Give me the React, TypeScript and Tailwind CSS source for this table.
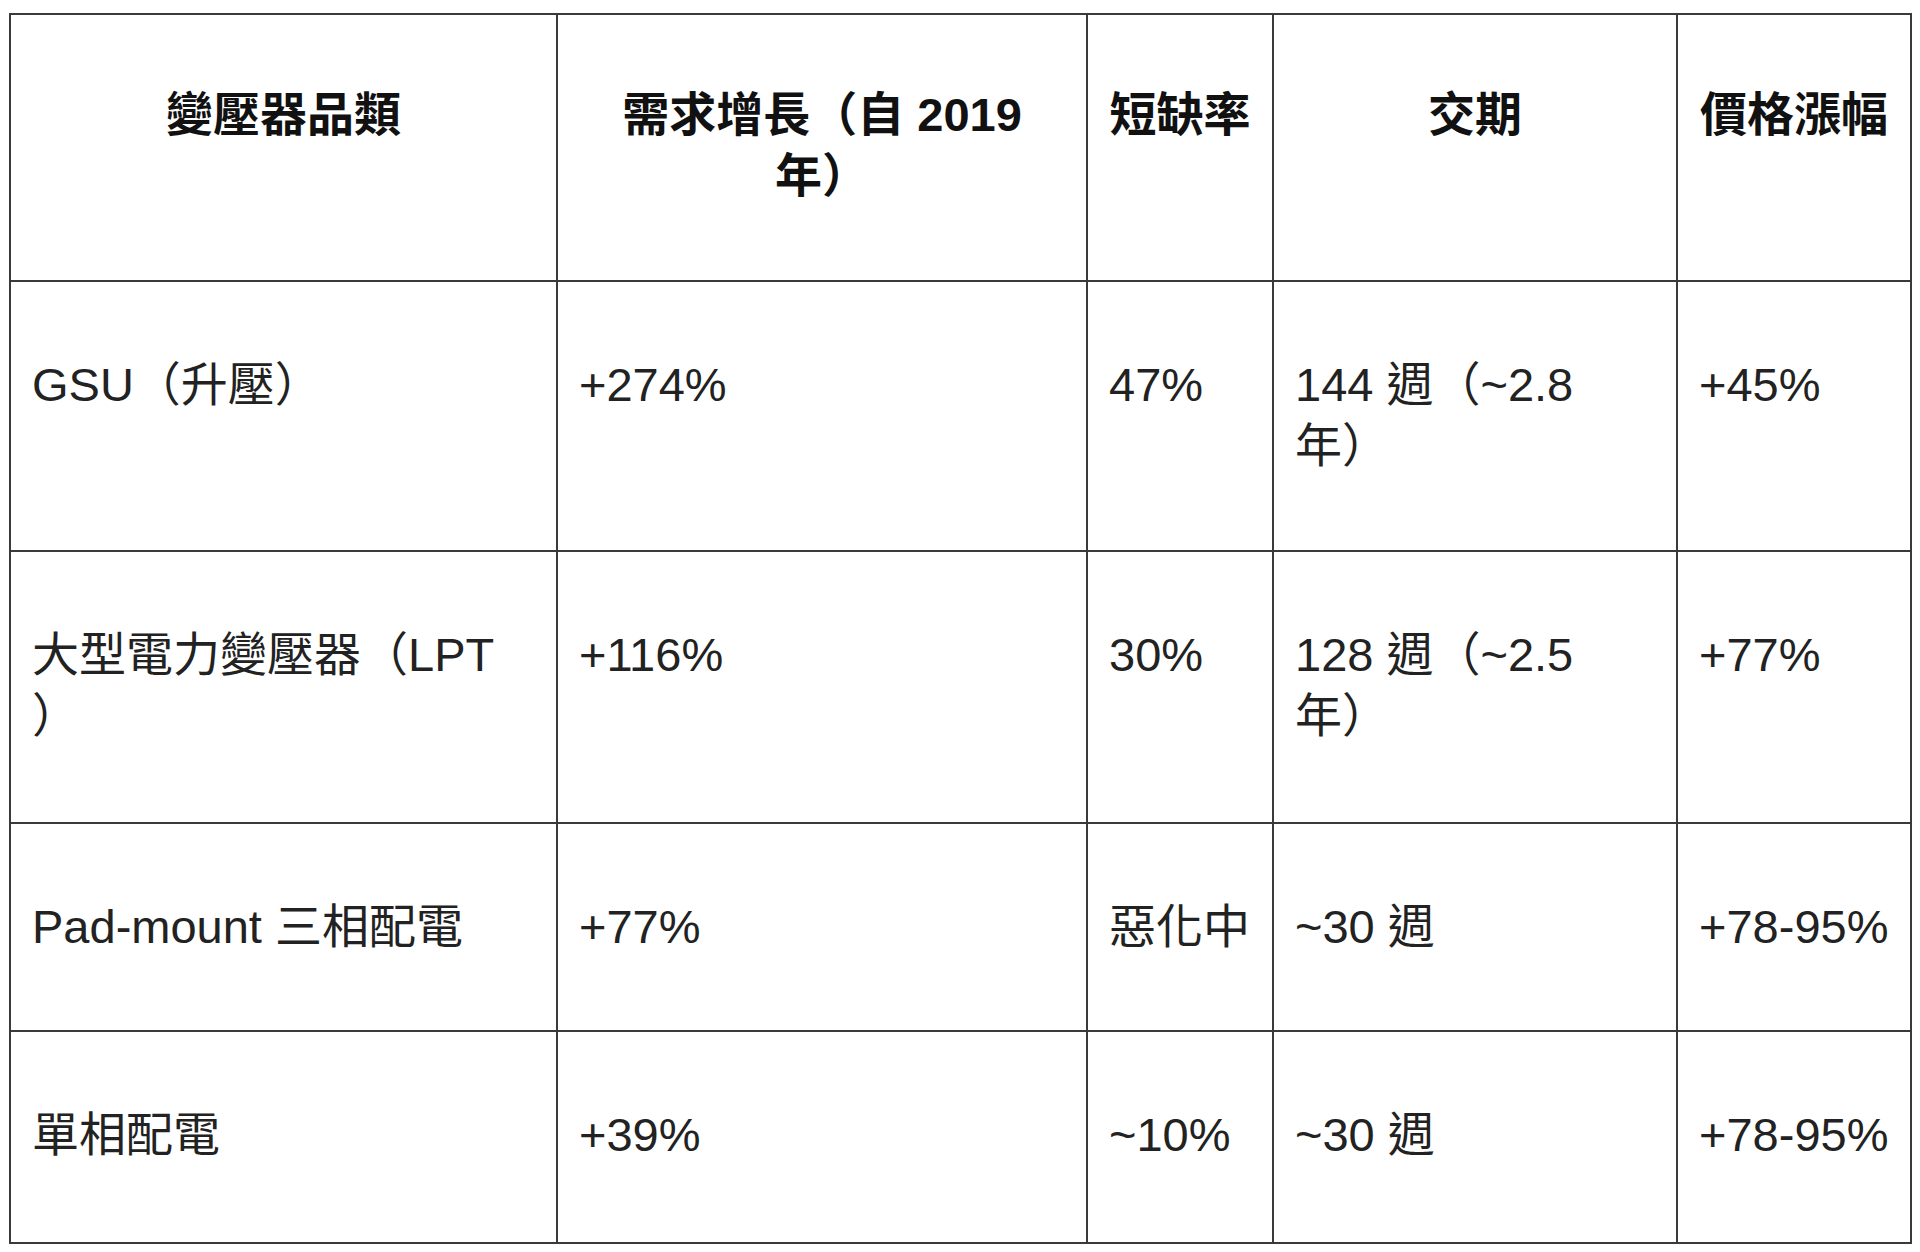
const font = { fontFamily: '"Liberation Sans", "Noto Sans CJK TC", sans-serif' };

type Row = { name: React.ReactNode; growth: string; shortage: string; lead: string; price: string; h: string };

const rows: Row[] = [
  { name: "GSU（升壓）", growth: "+274%", shortage: "47%", lead: "144 週（~2.8 年）", price: "+45%", h: "h-[270px]" },
  {
    name: (
      <>
        大型電力變壓器（LPT
        <br />）
      </>
    ),
    growth: "+116%",
    shortage: "30%",
    lead: "128 週（~2.5 年）",
    price: "+77%",
    h: "h-[272px]",
  },
  { name: "Pad-mount 三相配電", growth: "+77%", shortage: "惡化中", lead: "~30 週", price: "+78-95%", h: "h-[208px]" },
  { name: "單相配電", growth: "+39%", shortage: "~10%", lead: "~30 週", price: "+78-95%", h: "h-[212px]" },
];

const headers: React.ReactNode[] = [
  "變壓器品類",
  <>
    需求增長（自 2019
    <br />
    年）
  </>,
  "短缺率",
  "交期",
  "價格漲幅",
];

const cell = "border-2 border-[#3a3a3a] align-top px-[21px] text-[47px] leading-[61px]";

export default function App() {
  return (
    <div className="min-h-screen bg-white pt-[13px] pl-[9px]" style={font}>
      <table className="table-fixed border-collapse w-[1903px]">
        <colgroup>
          <col className="w-[547px]" />
          <col className="w-[530px]" />
          <col className="w-[186px]" />
          <col className="w-[404px]" />
          <col className="w-[234px]" />
        </colgroup>
        <thead>
          <tr className="h-[267px]">
            {headers.map((t, i) => (
              <th key={i} className={`${cell} pt-[69px] leading-[59px] font-bold text-center text-[#111111] ${i === 4 ? "whitespace-nowrap" : ""}`}>
                {t}
              </th>
            ))}
          </tr>
        </thead>
        <tbody className="text-[#222222]">
          {rows.map((r, i) => (
            <tr key={i} className={r.h}>
              <td className={`${cell} pt-[72px]`}>{r.name}</td>
              <td className={`${cell} pt-[72px]`}>{r.growth}</td>
              <td className={`${cell} pt-[72px] whitespace-nowrap`}>{r.shortage}</td>
              <td className={`${cell} pt-[72px]`}>{r.lead}</td>
              <td className={`${cell} pt-[72px] whitespace-nowrap`}>{r.price}</td>
            </tr>
          ))}
        </tbody>
      </table>
    </div>
  );
}
